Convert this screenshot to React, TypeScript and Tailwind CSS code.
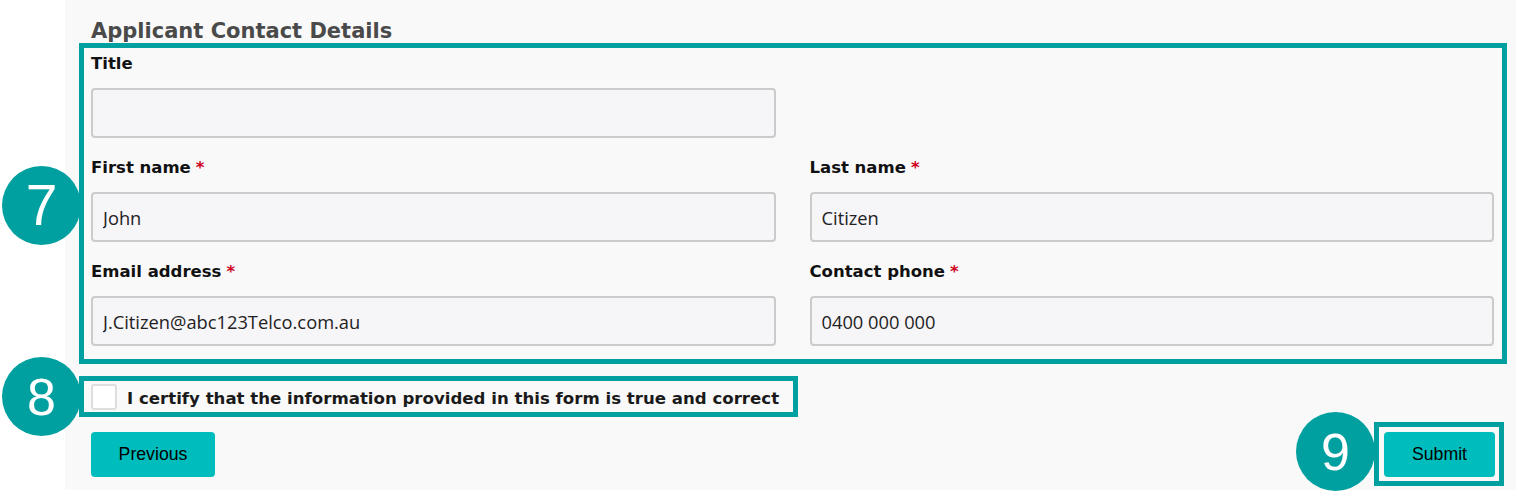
const label = "font-['DejaVu_Sans',sans-serif] font-bold text-[16.5px] leading-[24px] text-[#111]"
const input =
  "h-[50px] w-full rounded-[4px] border-2 border-[#cbcbcb] bg-[#f6f5f8] px-[10px] font-['Open_Sans',sans-serif] text-[18.3px] text-[#222] outline-none"
const button =
  "h-[45px] rounded-[4px] bg-[#00bdbd] font-['Liberation_Sans',Arial,sans-serif] text-[17.7px] text-black"

export default function App() {
  return (
    <div className="relative h-[496px] w-[1525px] overflow-hidden bg-white">
      <div className="ml-[65px] h-[490px] w-[1451px] bg-[#f9f9f9] pl-[14px] pt-[19px]">
        <h2 className="ml-[12px] font-['DejaVu_Sans',sans-serif] text-[21px] leading-[24px] font-bold text-[#4a4a4a]">
          Applicant Contact Details
        </h2>

        {/* Contact fields */}
        <div className="w-[1428px] border-[5px] border-[#00a0a0] pb-[13px] pl-[7px] pr-[8px] pt-[4px]">
          <div className="grid grid-cols-2 gap-x-[34px] gap-y-[18px]">
            <Field label="Title" value="" />
            <div />
            <Field label="First name" value="John" required />
            <Field label="Last name" value="Citizen" required />
            <Field label="Email address" value="J.Citizen@abc123Telco.com.au" required />
            <Field label="Contact phone" value="0400 000 000" required />
          </div>
        </div>

        {/* Certification */}
        <div className="mt-[12px] flex w-fit items-center gap-[10px] border-[5px] border-[#00a0a0] pb-[2px] pl-[7px] pr-[14px] pt-[3px]">
          <span className="h-[26px] w-[26px] rounded-[3px] border-2 border-[#dedede] bg-white" />
          <span className="pt-[4px] font-['DejaVu_Sans',sans-serif] text-[16.6px] leading-[22px] font-bold text-[#1a1a1a]">
            I certify that the information provided in this form is true and correct
          </span>
        </div>

        <div className="mt-[5px] flex w-[1425px] items-center justify-between">
          <button className={`${button} ml-[12px] w-[124px]`}>Previous</button>
          <div className="border-[5px] border-[#00a0a0] pb-[4px] pl-[5px] pr-[4px] pt-[5px]">
            <button className={`${button} block w-[111px]`}>Submit</button>
          </div>
        </div>
      </div>

      <Marker n="7" className="left-[2px] top-[166px] text-[57px]" />
      <Marker n="8" className="left-[2px] top-[357px] text-[52px]" />
      <Marker n="9" className="left-[1296px] top-[412px] text-[52px]" />
    </div>
  )
}

function Field({ label: text, value, required }: { label: string; value: string; required?: boolean }) {
  return (
    <div>
      <p className={`${label} mb-[12px]`}>
        {text}
        {required && <span className="ml-[5px] text-[#d0021b]">*</span>}
      </p>
      <input className={input} defaultValue={value} />
    </div>
  )
}

function Marker({ n, className }: { n: string; className: string }) {
  return (
    <div
      className={`absolute flex h-[79px] w-[79px] items-center justify-center rounded-full bg-[#00a0a0] font-['Liberation_Sans',Arial,sans-serif] leading-none text-white ${className}`}
    >
      {n}
    </div>
  )
}
